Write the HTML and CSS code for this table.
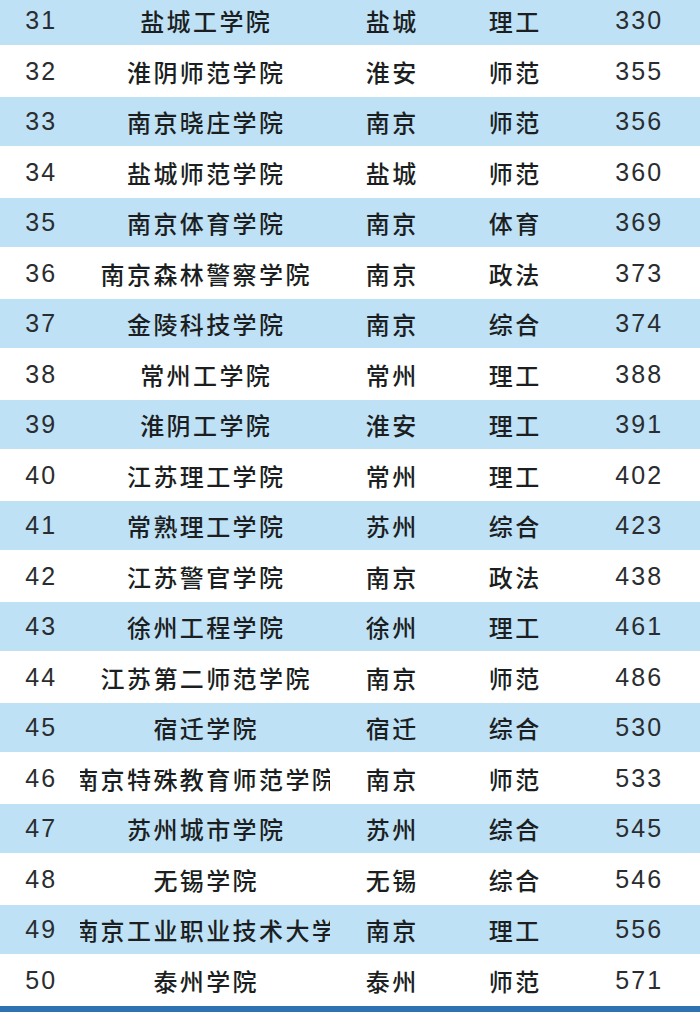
FILE: index.html
```html
<!DOCTYPE html>
<html lang="zh-CN">
<head>
<meta charset="utf-8">
<title>排名</title>
<link rel="stylesheet" href="styles.css">
</head>
<body>
<div class="table">
  <div class="row blue"><span class="c num">31</span><span class="c name">盐城工学院</span><span class="c">盐城</span><span class="c">理工</span><span class="c num">330</span></div>
  <div class="row white"><span class="c num">32</span><span class="c name">淮阴师范学院</span><span class="c">淮安</span><span class="c">师范</span><span class="c num">355</span></div>
  <div class="row blue"><span class="c num">33</span><span class="c name">南京晓庄学院</span><span class="c">南京</span><span class="c">师范</span><span class="c num">356</span></div>
  <div class="row white"><span class="c num">34</span><span class="c name">盐城师范学院</span><span class="c">盐城</span><span class="c">师范</span><span class="c num">360</span></div>
  <div class="row blue"><span class="c num">35</span><span class="c name">南京体育学院</span><span class="c">南京</span><span class="c">体育</span><span class="c num">369</span></div>
  <div class="row white"><span class="c num">36</span><span class="c name">南京森林警察学院</span><span class="c">南京</span><span class="c">政法</span><span class="c num">373</span></div>
  <div class="row blue"><span class="c num">37</span><span class="c name">金陵科技学院</span><span class="c">南京</span><span class="c">综合</span><span class="c num">374</span></div>
  <div class="row white"><span class="c num">38</span><span class="c name">常州工学院</span><span class="c">常州</span><span class="c">理工</span><span class="c num">388</span></div>
  <div class="row blue"><span class="c num">39</span><span class="c name">淮阴工学院</span><span class="c">淮安</span><span class="c">理工</span><span class="c num">391</span></div>
  <div class="row white"><span class="c num">40</span><span class="c name">江苏理工学院</span><span class="c">常州</span><span class="c">理工</span><span class="c num">402</span></div>
  <div class="row blue"><span class="c num">41</span><span class="c name">常熟理工学院</span><span class="c">苏州</span><span class="c">综合</span><span class="c num">423</span></div>
  <div class="row white"><span class="c num">42</span><span class="c name">江苏警官学院</span><span class="c">南京</span><span class="c">政法</span><span class="c num">438</span></div>
  <div class="row blue"><span class="c num">43</span><span class="c name">徐州工程学院</span><span class="c">徐州</span><span class="c">理工</span><span class="c num">461</span></div>
  <div class="row white"><span class="c num">44</span><span class="c name">江苏第二师范学院</span><span class="c">南京</span><span class="c">师范</span><span class="c num">486</span></div>
  <div class="row blue"><span class="c num">45</span><span class="c name">宿迁学院</span><span class="c">宿迁</span><span class="c">综合</span><span class="c num">530</span></div>
  <div class="row white"><span class="c num">46</span><span class="c name">南京特殊教育师范学院</span><span class="c">南京</span><span class="c">师范</span><span class="c num">533</span></div>
  <div class="row blue"><span class="c num">47</span><span class="c name">苏州城市学院</span><span class="c">苏州</span><span class="c">综合</span><span class="c num">545</span></div>
  <div class="row white"><span class="c num">48</span><span class="c name">无锡学院</span><span class="c">无锡</span><span class="c">综合</span><span class="c num">546</span></div>
  <div class="row blue"><span class="c num">49</span><span class="c name">南京工业职业技术大学</span><span class="c">南京</span><span class="c">理工</span><span class="c num">556</span></div>
  <div class="row white"><span class="c num">50</span><span class="c name">泰州学院</span><span class="c">泰州</span><span class="c">师范</span><span class="c num">571</span></div>
  <div class="bar"></div>
</div>
</body>
</html>
```
FILE: styles.css
```css
html, body {
  margin: 0;
  padding: 0;
  background: #ffffff;
}

.table {
  margin-top: -4px;
  width: 700px;
  font-family: "Noto Sans CJK SC", "Liberation Sans", sans-serif;
  color: #1c1f22;
}

.row {
  display: grid;
  grid-template-columns: 80px 250px 122px 124px 124px;
  align-items: center;
}

.row.blue {
  height: 49px;
  background: #bfe1f6;
}

.row.white {
  height: 52px;
  background: #ffffff;
}

.c {
  display: flex;
  justify-content: center;
  align-items: center;
  font-size: 24px;
  font-weight: 500;
  letter-spacing: 2.4px;
  white-space: nowrap;
  overflow: hidden;
  padding-left: 2.4px;
}

.c.num {
  font-family: "Liberation Sans", sans-serif;
  font-weight: 400;
  font-size: 25px;
  letter-spacing: 2px;
  color: #2a2d30;
}

.bar {
  height: 10px;
  background: #2f72b4;
}
```
